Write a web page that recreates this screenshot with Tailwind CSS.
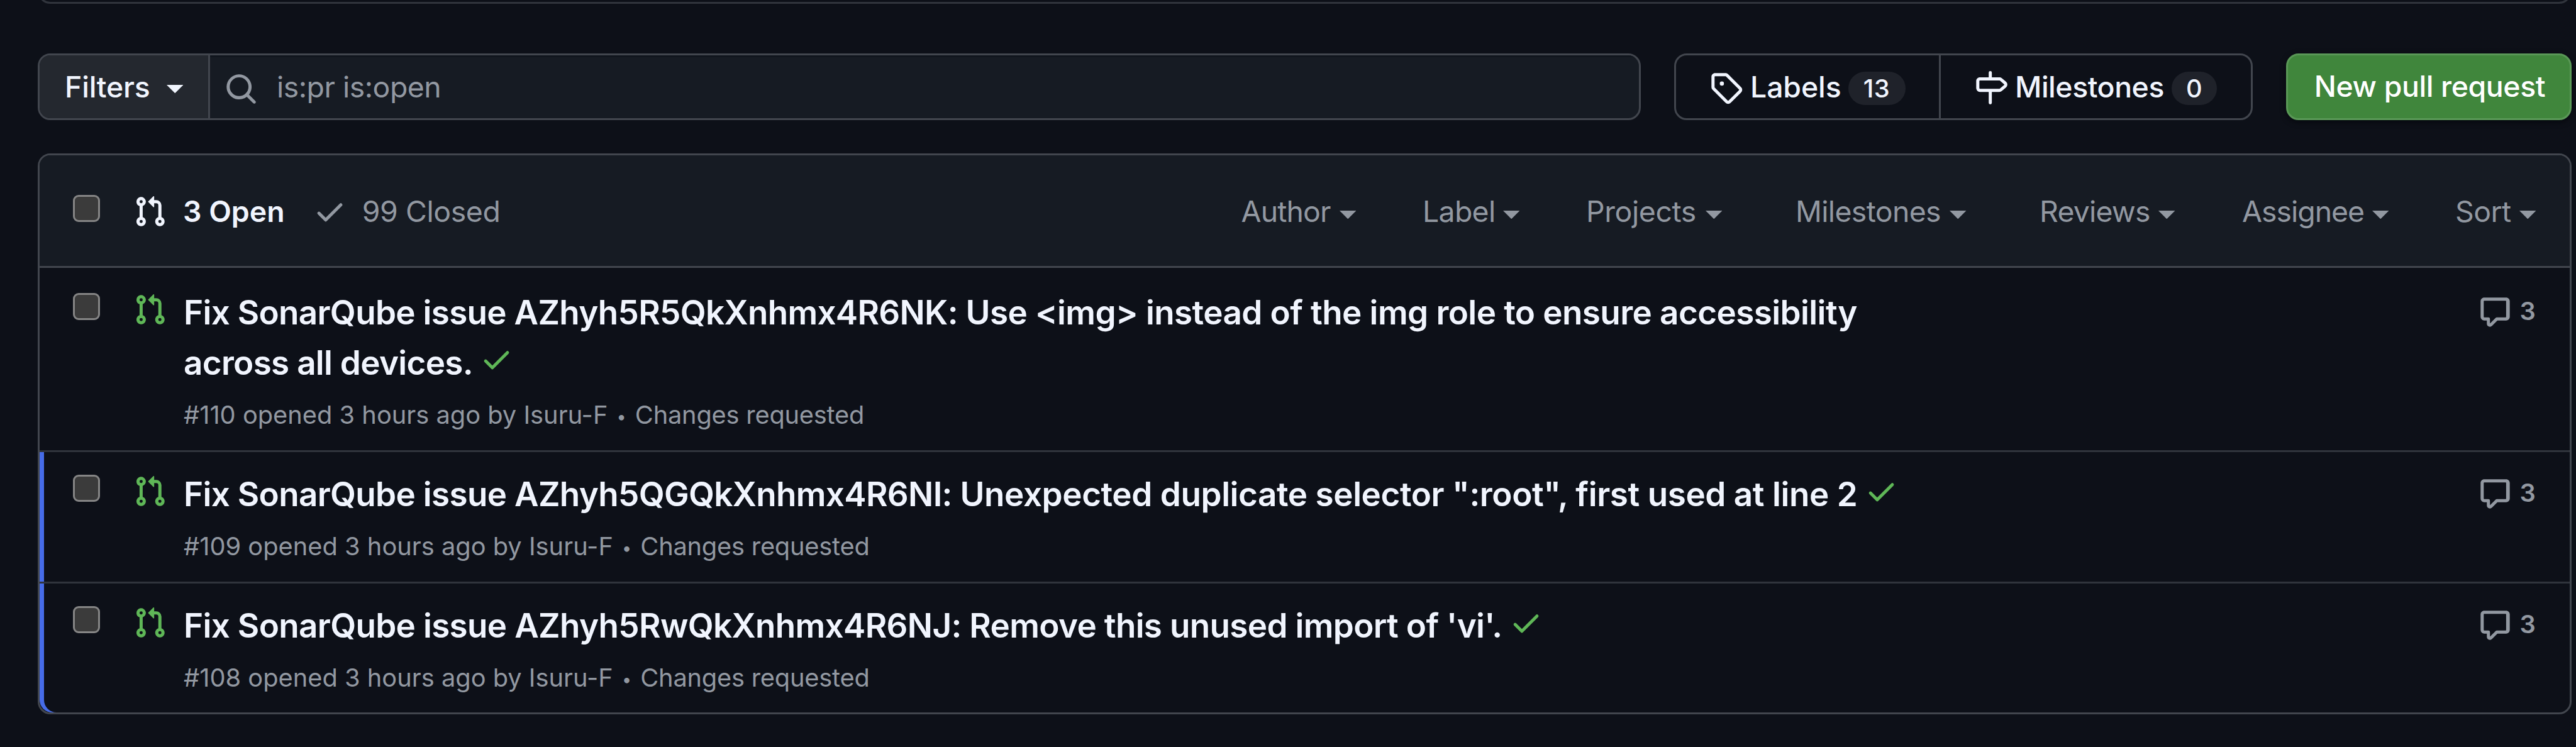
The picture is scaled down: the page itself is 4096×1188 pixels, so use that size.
<!DOCTYPE html>
<html lang="en">
<head>
<meta charset="utf-8">
<title>Pull requests</title>
<script src="https://cdn.jsdelivr.net/npm/@tailwindcss/browser@4"></script>
</head>
<body class="w-[4096px] h-[1188px] overflow-hidden bg-[#0d1018] font-['Inter',sans-serif] text-[46.4px] text-[#f1f5fe]">

<svg class="hidden">
  <symbol id="pr" viewBox="0 0 16 16"><path d="M1.5 3.25a2.25 2.25 0 1 1 3 2.122v5.256a2.251 2.251 0 1 1-1.5 0V5.372A2.25 2.25 0 0 1 1.5 3.25Zm5.677-.177L9.573.677A.25.25 0 0 1 10 .854V2.5h1A2.5 2.5 0 0 1 13.5 5v5.628a2.251 2.251 0 1 1-1.5 0V5a1 1 0 0 0-1-1h-1v1.646a.25.25 0 0 1-.427.177L7.177 3.427a.25.25 0 0 1 0-.354ZM3.75 2.5a.75.75 0 1 0 0 1.5.75.75 0 0 0 0-1.5Zm0 9.5a.75.75 0 1 0 0 1.5.75.75 0 0 0 0-1.5Zm8.25.75a.75.75 0 1 0 1.5 0 .75.75 0 0 0-1.5 0Z"/></symbol>
  <symbol id="check" viewBox="0 0 16 16"><path d="M13.78 4.22a.75.75 0 0 1 0 1.06l-7.25 7.25a.75.75 0 0 1-1.06 0L2.22 9.28a.751.751 0 0 1 .018-1.042.751.751 0 0 1 1.042-.018L6 10.94l6.72-6.72a.75.75 0 0 1 1.06 0Z"/></symbol>
  <symbol id="search" viewBox="0 0 16 16"><path d="M10.68 11.74a6 6 0 0 1-7.922-8.982 6 6 0 0 1 8.982 7.922l3.04 3.04a.749.749 0 0 1-.326 1.275.749.749 0 0 1-.734-.215ZM11.5 7a4.499 4.499 0 1 0-8.997 0A4.499 4.499 0 0 0 11.5 7Z"/></symbol>
  <symbol id="tag" viewBox="0 0 16 16"><path d="M1 7.775V2.75C1 1.784 1.784 1 2.75 1h5.025c.464 0 .91.184 1.238.513l6.25 6.25a1.75 1.75 0 0 1 0 2.474l-5.026 5.026a1.75 1.75 0 0 1-2.474 0l-6.25-6.25A1.752 1.752 0 0 1 1 7.775Zm1.5 0c0 .066.026.13.073.177l6.25 6.25a.25.25 0 0 0 .354 0l5.025-5.025a.25.25 0 0 0 0-.354l-6.25-6.25a.25.25 0 0 0-.177-.073H2.75a.25.25 0 0 0-.25.25ZM6 5a1 1 0 1 1 0 2 1 1 0 0 1 0-2Z"/></symbol>
  <symbol id="milestone" viewBox="0 0 16 16"><path d="M7.75 0a.75.75 0 0 1 .75.75V3h3.634c.414 0 .814.147 1.13.414l2.07 1.75a1.75 1.75 0 0 1 0 2.672l-2.07 1.75a1.75 1.75 0 0 1-1.13.414H8.5v5.25a.75.75 0 0 1-1.5 0V10H2.75A1.75 1.75 0 0 1 1 8.25v-3.5C1 3.784 1.784 3 2.75 3H7V.75A.75.75 0 0 1 7.75 0Zm4.384 8.5a.25.25 0 0 0 .161-.06l2.07-1.75a.248.248 0 0 0 0-.38l-2.07-1.75a.25.25 0 0 0-.161-.06H2.75a.25.25 0 0 0-.25.25v3.5c0 .138.112.25.25.25h9.384Z"/></symbol>
  <symbol id="comment" viewBox="0 0 16 16"><path d="M1 2.75C1 1.784 1.784 1 2.75 1h10.5c.966 0 1.75.784 1.75 1.75v7.5A1.75 1.75 0 0 1 13.25 12H9.06l-2.573 2.573A1.458 1.458 0 0 1 4 13.543V12H2.75A1.75 1.75 0 0 1 1 10.25Zm1.75-.25a.25.25 0 0 0-.25.25v7.5c0 .138.112.25.25.25h2a.75.75 0 0 1 .75.75v2.19l2.72-2.72a.749.749 0 0 1 .53-.22h4.25a.25.25 0 0 0 .25-.25v-7.5a.25.25 0 0 0-.25-.25Z"/></symbol>
  <symbol id="caret" viewBox="0 0 8 4"><path d="M0 0h8L4 4z"/></symbol>
</svg>

<div class="flex w-[4029px] ml-[60px] flex-col">
  <!-- bottom edge of the notice above the toolbar -->
  <div class="h-[6px] overflow-hidden flex items-end"><div class="h-[60px] w-full shrink-0 rounded-[20px] border-[3px] border-[#30343c]"></div></div>

  <!-- toolbar -->
  <div class="mt-[79px] flex h-[106px] gap-[53px]">
    <div class="flex w-[2549px] overflow-hidden rounded-[20px] border-[3px] border-[#42464e] bg-[#161b23]">
      <button class="flex w-[271px] items-center border-r-[3px] border-[#42464e] bg-[#24282f] pl-[40px] pt-px font-medium tracking-[-0.2px]">Filters<svg class="ml-[26px] mt-[6px] h-[13.25px] w-[26.5px] fill-current"><use href="#caret"/></svg></button>
      <div class="flex flex-1 items-center pl-[23px] text-[#9298a1] shadow-[inset_0_3px_0_#10151d]">
        <svg class="mt-[7px] size-[53px] fill-current"><use href="#search"/></svg>
        <span class="ml-[30px] mt-[2px] tracking-[-0.5px]">is:pr is:open</span>
      </div>
    </div>
    <div class="flex w-[920px] rounded-[20px] border-[3px] border-[#42464e] font-medium">
      <div class="flex w-[421px] items-center border-r-[3px] border-[#42464e] pl-[53px]">
        <svg class="mt-[2px] size-[53px] fill-current"><use href="#tag"/></svg>
        <span class="ml-[12px] mt-[2px] tracking-[-0.1px]">Labels</span>
        <span class="ml-[11px] mt-[5px] flex h-[53px] w-[91px] items-center justify-center rounded-[26.5px] bg-[#1f222a] text-[39.8px] tracking-[0.5px]">13</span>
      </div>
      <div class="flex flex-1 items-center pl-[53px]">
        <svg class="mt-[2px] size-[53px] fill-current"><use href="#milestone"/></svg>
        <span class="ml-[12px] mt-[2px] tracking-[-0.45px]">Milestones</span>
        <span class="ml-[12px] mt-[5px] flex h-[53px] w-[72px] items-center justify-center rounded-[26.5px] bg-[#1f222a] text-[39.8px]">0</span>
      </div>
    </div>
    <button class="flex w-[454px] items-center justify-center rounded-[20px] border-[3px] border-[#5a9857] bg-[#40863c] pl-[3px] font-medium tracking-[-0.39px] text-white shadow-[0_3px_10px_rgba(1,4,9,0.6)]">New pull request</button>
  </div>

  <!-- list -->
  <div class="mt-[53px] overflow-hidden rounded-[20px] border-[3px] border-[#42464e]">
    <div class="flex h-[179px] items-center border-b-[3px] border-[#42464e] bg-[#161b23] pl-[53px] pt-[2px] text-[#9298a1]">
      <div class="mt-[-10px] size-[43px] rounded-[9px] border-[3px] border-[#858585] bg-[#3b3b3b]"></div>
      <svg class="ml-[53px] size-[53px] fill-[#f1f5fe]"><use href="#pr"/></svg>
      <span class="ml-[26px] mt-[2px] font-semibold text-[#f1f5fe]">3 Open</span>
      <svg class="ml-[45px] size-[53px] fill-current"><use href="#check"/></svg>
      <span class="ml-[25px] mt-[2px] tracking-[-0.4px]">99 Closed</span>
      <div class="ml-auto mr-[53px] mt-[2px] flex">
        <div class="flex w-[288.5px] items-center"><span class="w-[156px] tracking-[-0.86px]">Author</span><svg class="mt-[9px] h-[13.25px] w-[26.5px] fill-current"><use href="#caret"/></svg></div>
        <div class="flex w-[260px] items-center"><span class="w-[128px] tracking-[-0.7px]">Label</span><svg class="mt-[9px] h-[13.25px] w-[26.5px] fill-current"><use href="#caret"/></svg></div>
        <div class="flex w-[333px] items-center"><span class="w-[189.5px] tracking-[-0.4px]">Projects</span><svg class="mt-[9px] h-[13.25px] w-[26.5px] fill-current"><use href="#caret"/></svg></div>
        <div class="flex w-[388px] items-center"><span class="w-[245px] tracking-[-0.65px]">Milestones</span><svg class="mt-[9px] h-[13.25px] w-[26.5px] fill-current"><use href="#caret"/></svg></div>
        <div class="flex w-[322px] items-center"><span class="w-[189px] tracking-[-0.8px]">Reviews</span><svg class="mt-[9px] h-[13.25px] w-[26.5px] fill-current"><use href="#caret"/></svg></div>
        <div class="flex w-[339px] items-center"><span class="w-[207px] tracking-[-1px]">Assignee</span><svg class="mt-[9px] h-[13.25px] w-[26.5px] fill-current"><use href="#caret"/></svg></div>
        <div class="flex w-[129px] items-center"><span class="w-[102px] tracking-[-0.6px]">Sort</span><svg class="mt-[9px] h-[13.25px] w-[26.5px] shrink-0 fill-current"><use href="#caret"/></svg></div>
      </div>
    </div>

    <div class="flex h-[293px] items-start border-b-[3px] border-[#30343c] pl-[53px]">
      <div class="mt-[40px] size-[43px] rounded-[9px] border-[3px] border-[#858585] bg-[#3b3b3b]"></div>
      <svg class="ml-[53px] mt-[40px] size-[53px] fill-[#5fb757]"><use href="#pr"/></svg>
      <div class="ml-[27px] pt-[32px]">
        <div class="text-[53px] font-semibold leading-[79.5px] whitespace-nowrap"><span class="tracking-[-0.7px]">Fix SonarQube issue AZhyh5R5QkXnhmx4R6NK: </span><span class="tracking-[-0.585px]">Use &lt;img&gt; instead of the img role to ensure accessibility</span><br><span class="tracking-[-0.7px]">across all devices.</span><svg class="ml-[11.5px] inline-block size-[53px] align-[-2.5px] fill-[#5fb757]"><use href="#check"/></svg></div>
        <div class="mt-[13px] text-[39.8px] leading-[59.5px] text-[#9298a1]">#110 opened 3 hours ago by Isuru-F <span class="inline-block w-[21px] text-center align-[2px] text-[27px] leading-none">•</span> <span class="tracking-[-0.22px]">Changes requested</span></div>
      </div>
      <div class="ml-auto mr-[53px] mt-[44px] flex text-[39.8px] font-semibold text-[#9298a1]">
        <svg class="size-[53px] fill-current"><use href="#comment"/></svg>
        <span class="ml-[13px] w-[26.5px] leading-[50px]">3</span>
      </div>
    </div>

    <div class="flex h-[209px] items-start border-b-[3px] border-[#30343c] pl-[53px] shadow-[inset_7px_0_0_#466ce8]">
      <div class="mt-[36px] size-[43px] rounded-[9px] border-[3px] border-[#858585] bg-[#3b3b3b]"></div>
      <svg class="ml-[53px] mt-[36px] size-[53px] fill-[#5fb757]"><use href="#pr"/></svg>
      <div class="ml-[27px] pt-[28px]">
        <div class="text-[53px] font-semibold leading-[79.5px] whitespace-nowrap"><span class="tracking-[-0.68px]">Fix SonarQube issue AZhyh5QGQkXnhmx4R6NI: </span><span class="tracking-[-0.43px]">Unexpected duplicate selector ":root", first used at line 2</span><svg class="ml-[12px] inline-block size-[53px] align-[-2.5px] fill-[#5fb757]"><use href="#check"/></svg></div>
        <div class="mt-[12px] text-[39.8px] leading-[59.5px] text-[#9298a1]">#109 opened 3 hours ago by Isuru-F <span class="inline-block w-[21px] text-center align-[2px] text-[27px] leading-none">•</span> <span class="tracking-[-0.22px]">Changes requested</span></div>
      </div>
      <div class="ml-auto mr-[53px] mt-[40px] flex text-[39.8px] font-semibold text-[#9298a1]">
        <svg class="size-[53px] fill-current"><use href="#comment"/></svg>
        <span class="ml-[13px] w-[26.5px] leading-[50px]">3</span>
      </div>
    </div>

    <div class="flex h-[205px] items-start rounded-bl-[20px] pl-[53px] shadow-[inset_7px_0_0_#466ce8]">
      <div class="mt-[36px] size-[43px] rounded-[9px] border-[3px] border-[#858585] bg-[#3b3b3b]"></div>
      <svg class="ml-[53px] mt-[36px] size-[53px] fill-[#5fb757]"><use href="#pr"/></svg>
      <div class="ml-[27px] pt-[28px]">
        <div class="text-[53px] font-semibold leading-[79.5px] whitespace-nowrap tracking-[-0.67px]">Fix SonarQube issue AZhyh5RwQkXnhmx4R6NJ: Remove this unused import of 'vi'.<svg class="ml-[11.5px] inline-block size-[53px] align-[-2.5px] fill-[#5fb757]"><use href="#check"/></svg></div>
        <div class="mt-[12px] text-[39.8px] leading-[59.5px] text-[#9298a1]">#108 opened 3 hours ago by Isuru-F <span class="inline-block w-[21px] text-center align-[2px] text-[27px] leading-none">•</span> <span class="tracking-[-0.22px]">Changes requested</span></div>
      </div>
      <div class="ml-auto mr-[53px] mt-[40px] flex text-[39.8px] font-semibold text-[#9298a1]">
        <svg class="size-[53px] fill-current"><use href="#comment"/></svg>
        <span class="ml-[13px] w-[26.5px] leading-[50px]">3</span>
      </div>
    </div>
  </div>
</div>
</body>
</html>
